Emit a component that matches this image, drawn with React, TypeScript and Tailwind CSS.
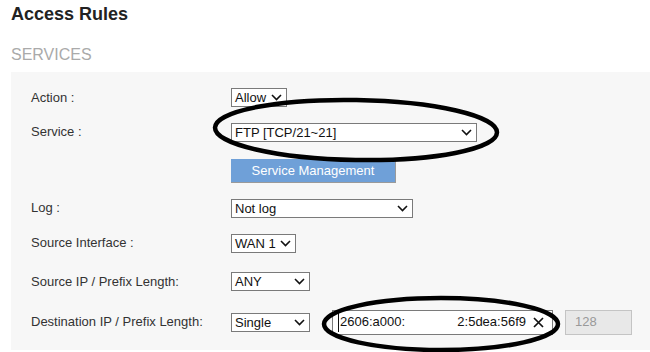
import { ReactNode } from "react";

function Chevron() {
  return (
    <svg width="11" height="7" viewBox="0 0 11 7" className="shrink-0">
      <path d="M1 1l4.5 4.5L10 1" fill="none" stroke="#111" strokeWidth="1.6" />
    </svg>
  );
}

function Select({ value, w }: { value: string; w: string }) {
  return (
    <div className={`${w} h-[19px] flex items-center justify-between border border-[#7a7a7a] bg-white pl-[3px] pr-[4px] text-[13px] text-[#111] leading-none`}>
      <span>{value}</span>
      <Chevron />
    </div>
  );
}

function Row({ label, h, children }: { label?: string; h: string; children: ReactNode }) {
  return (
    <div className={`flex items-center ${h}`}>
      <div className="w-[200px] text-[13px] text-[#333]">{label}</div>
      <div className="flex items-center">{children}</div>
    </div>
  );
}

export default function App() {
  return (
    <div className="relative w-[650px] h-[352px] bg-white overflow-hidden font-['Liberation_Sans',Arial,sans-serif]">
      <div className="pl-[11px] pt-[3px]">
        <h1 className="text-[18px] font-bold text-[#222] leading-[22px]">Access Rules</h1>
        <h2 className="mt-[20px] text-[16px] text-[#aaa] leading-[20px]">SERVICES</h2>
      </div>
      <div className="ml-[11px] mt-[7px] bg-[#f7f7f7] pl-[20px] pt-[8px] pb-[8px]">
        <Row label="Action :" h="h-[35px]">
          <Select value="Allow" w="w-[56px]" />
        </Row>
        <Row label="Service :" h="h-[34px]">
          <Select value="FTP [TCP/21~21]" w="w-[246px]" />
        </Row>
        <Row h="h-[24px] mt-[10px]">
          <div className="w-[165px] h-[24px] bg-[#6fa0d8] border-r border-b border-[#9a9a9a] flex items-center justify-center text-[13px] text-white">
            Service Management
          </div>
        </Row>
        <Row label="Log :" h="h-[34px] mt-[8px]">
          <Select value="Not log" w="w-[182px]" />
        </Row>
        <Row label="Source Interface :" h="h-[36px]">
          <Select value="WAN 1" w="w-[65px]" />
        </Row>
        <Row label="Source IP / Prefix Length:" h="h-[41px]">
          <Select value="ANY" w="w-[79px]" />
        </Row>
        <Row label="Destination IP / Prefix Length:" h="h-[40px]">
          <Select value="Single" w="w-[79px]" />
          <div className="ml-[22px] w-[221px] h-[25px] border border-[#7a7a7a] bg-white flex items-center pl-[5px] pr-[8px] text-[13px] text-[#111]">
            <span className="border-l border-[#111] pl-[1px]">2606:a000:</span>
            <span className="ml-auto">2:5dea:56f9</span>
            <svg width="11" height="11" viewBox="0 0 11 11" className="ml-[7px]">
              <path d="M1 1l9 9M10 1l-9 9" stroke="#111" strokeWidth="1.7" />
            </svg>
          </div>
          <div className="ml-[12px] w-[67px] h-[25px] border border-[#c4c4c4] bg-[#e8e8e8] flex items-center pl-[9px] text-[13px] text-[#999]">
            128
          </div>
        </Row>
      </div>
      <svg className="absolute inset-0 pointer-events-none" width="650" height="352">
        <ellipse cx="356" cy="130" rx="141" ry="30" fill="none" stroke="#000" strokeWidth="4.5" transform="rotate(1 356 130)" />
        <ellipse cx="441" cy="324" rx="117" ry="26" fill="none" stroke="#000" strokeWidth="4.5" />
      </svg>
    </div>
  );
}
